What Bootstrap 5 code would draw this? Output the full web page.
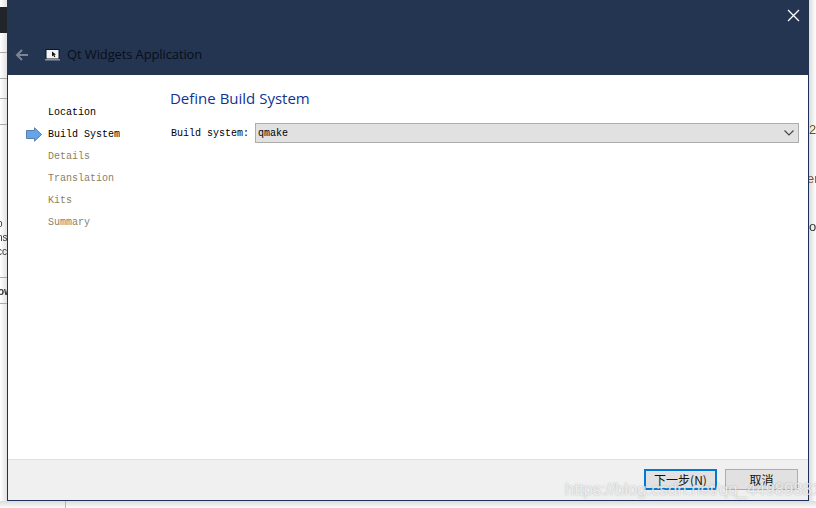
<!DOCTYPE html>
<html lang="en"><head><meta charset="utf-8"><title>Qt Widgets Application</title>
<link href="https://cdn.jsdelivr.net/npm/bootstrap@5.3.0/dist/css/bootstrap.min.css" rel="stylesheet">
<style>
html,body{margin:0;height:508px;overflow:hidden}
body{background:#fff;position:relative;font-family:"Liberation Mono",monospace}
.bg-frag{position:absolute;font-family:"Liberation Sans",sans-serif;font-size:13px;line-height:14px;color:#333;white-space:nowrap;filter:blur(.3px)}
.bg-rule{position:absolute;background:#a9a9a9;height:1px;left:0;width:7px}
.bg-dark{position:absolute;left:0;top:7px;width:7px;height:26px;background:#3c3c3c}
.bg-left{position:absolute;left:0;top:0;width:7px;height:508px;background:linear-gradient(90deg,#fff,#e2e2e2)}
.bg-right{position:absolute;left:809px;top:0;width:7px;height:508px;background:linear-gradient(90deg,#dcdcdc,#fff)}
.bg-bottom{position:absolute;left:0;top:501px;width:816px;height:7px;background:linear-gradient(180deg,#dcdcdc,#fbfbfb)}
.bg-tick{position:absolute;left:65px;top:501px;width:1px;height:7px;background:#b5b5b5}
.wiz{position:absolute;left:7px;top:0;width:802px;height:501px;background:#fff;border:solid #1f3157;border-width:0 1px 1px}
.wiz-head{height:75px;margin:0 -1px;background:#243551;padding-left:8px;padding-top:34px;color:#080e1a;font:13px/19px "Open Sans","Noto Sans",sans-serif}
.wiz-close{position:absolute;right:8px;top:9px;line-height:0}
.wiz-back{margin-right:16px;line-height:0}
.wiz-win{margin-right:7px;line-height:0}
.wiz-title{letter-spacing:-.12px}
.wiz-body{height:384px}
.wiz-steps{width:162px;padding-top:27px;padding-left:40px;font-size:10px;line-height:22px;color:#8a7f66}
.wiz-step{position:relative}
.wiz-step.on{color:#000}
.wiz-step svg{position:absolute;left:-22px;top:3px}
.wiz-main{padding-top:13px;padding-right:9px;padding-left:2px}
.wiz-h{font:15px/20px "Open Sans","Noto Sans",sans-serif;color:#103394;margin:0 0 15px 0}
.wiz-field{font-size:10px;color:#000;padding-left:1px;white-space:nowrap}
.wiz-combo{width:544px;height:20px;margin-left:6px;background:#e1e1e1;border:1px solid #adadad;padding:0 4px 0 2px;color:#000;font-size:10px}
.wiz-foot{height:41px;background:#f0f0f0;border-top:1px solid #dfdfdf;padding:9px 10px 0 0}
.wiz-btn{width:73px;height:21px;padding:0;border-radius:0;background:#e1e1e1;border:1px solid #adadad;color:#111;font:12px/18px "Noto Sans CJK SC",sans-serif}
.wiz-btn.def{border:2px solid #0078d7;line-height:17px}
.wiz-mark{position:absolute;left:565px;top:480px;font:16.700px/20px "Liberation Sans",sans-serif;color:rgba(255,255,255,.75);text-shadow:0 0 1.500px rgba(90,90,90,.5);white-space:nowrap}
</style></head><body>
<div class="bg-left"></div><div class="bg-right"></div><div class="bg-bottom"></div>
<div class="bg-dark"></div>
<div class="bg-rule" style="top:52px"></div><div class="bg-rule" style="top:78px"></div><div class="bg-rule" style="top:98px"></div><div class="bg-rule" style="top:124px"></div><div class="bg-rule" style="top:277px"></div><div class="bg-rule" style="top:303px"></div>
<div class="bg-frag" style="left:-3px;top:217px;font-size:10px;line-height:14px">o<br>ns<br>cc</div>
<div class="bg-frag" style="left:-2px;top:285px;font-size:10px;font-weight:700">ow</div>
<div class="bg-frag" style="left:809px;top:123px;color:#705020">2e</div>
<div class="bg-frag" style="left:807px;top:172px;color:#8b4a32">er</div>
<div class="bg-frag" style="left:809px;top:220px">o-</div>
<div class="bg-tick"></div>

<div class="wiz d-flex flex-column">
  <div class="wiz-head d-flex align-items-center align-self-stretch">
    <span class="wiz-back"><svg width="14" height="12" viewBox="0 0 14 12"><path d="M13 6H2M7 1 2 6l5 5" fill="none" stroke="#7b8493" stroke-width="2"/></svg></span>
    <span class="wiz-win"><svg width="15" height="12" viewBox="0 0 15 12"><rect x="1" y=".5" width="13" height="9.500" fill="#f4f4f4" stroke="#0c1424"/><rect x="0" y="10" width="15" height="1.500" fill="#8b93a1"/><path d="M7 2.500v5l1.300-1.200 1 2 1-.5-1-2 1.700-.2z" fill="#111"/></svg></span>
    <span class="wiz-title">Qt Widgets Application</span>
  </div>
  <span class="wiz-close"><svg width="13" height="13" viewBox="0 0 13 13"><path d="M1 1 12 12M12 1 1 12" stroke="#fff" stroke-width="1.300"/></svg></span>
  <div class="wiz-body d-flex">
    <div class="wiz-steps">
      <div class="wiz-step on">Location</div>
      <div class="wiz-step on"><svg width="16" height="15" viewBox="0 0 16 15"><path d="M.5 3.500h8V.8l7 6.700-7 6.700v-2.700h-8z" fill="#63a5ea" stroke="#5b7fa8"/></svg>Build System</div>
      <div class="wiz-step">Details</div>
      <div class="wiz-step">Translation</div>
      <div class="wiz-step">Kits</div>
      <div class="wiz-step">Summary</div>
    </div>
    <div class="wiz-main flex-grow-1">
      <h1 class="wiz-h">Define Build System</h1>
      <div class="d-flex align-items-center">
        <label class="wiz-field">Build system:</label>
        <div class="wiz-combo d-flex align-items-center justify-content-between"><span>qmake</span><svg width="10" height="6" viewBox="0 0 10 6"><path d="M.5.500 5 5 9.500.5" fill="none" stroke="#444" stroke-width="1.100"/></svg></div>
      </div>
    </div>
  </div>
  <div class="wiz-foot d-flex justify-content-end gap-2">
    <button class="btn wiz-btn def" type="button">下一步(N)</button>
    <button class="btn wiz-btn" type="button">取消</button>
  </div>
</div>
<div class="wiz-mark">https://blog.csdn.net/qq_44989881</div>
</body></html>
